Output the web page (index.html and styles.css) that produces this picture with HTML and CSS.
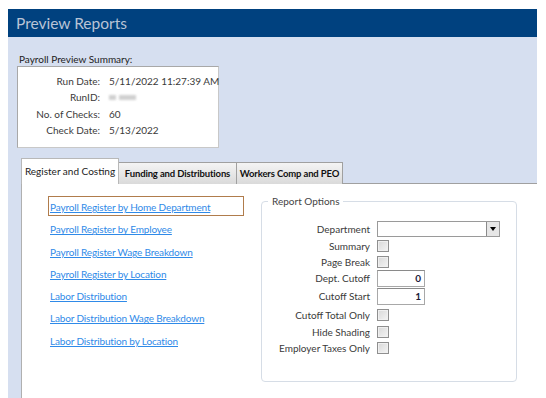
FILE: index.html
```html
<!DOCTYPE html>
<html>
<head>
    <meta name="viewport" content="width=device-width, initial-scale=1.0">
    <title>Preview Reports</title>
    <link rel="stylesheet" href="styles.css">
</head>
<body>
    <div class="window">
        <div class="header">Preview Reports</div>
        <div class="content">
            <div class="summary-caption">Payroll Preview Summary:</div>
            <div class="summary">
                <div class="label">Run Date:</div><div class="value">5/11/2022 11:27:39 AM</div>
                <div class="label">RunID:</div><div class="value"><span class="blur"></span><span class="blur wide"></span></div>
                <div class="label">No. of Checks:</div><div class="value">60</div>
                <div class="label">Check Date:</div><div class="value">5/13/2022</div>
            </div>

            <div class="tabs">
                <div class="tab active">Register and Costing</div>
                <div class="tab funding">Funding and Distributions</div>
                <div class="tab workers">Workers Comp and PEO</div>
                <div class="tab-rest"></div>
            </div>
            <div class="panel">
                <div class="links">
                    <a href="#" class="link focused">Payroll Register by Home Department</a>
                    <a href="#" class="link">Payroll Register by Employee</a>
                    <a href="#" class="link">Payroll Register Wage Breakdown</a>
                    <a href="#" class="link">Payroll Register by Location</a>
                    <a href="#" class="link">Labor Distribution</a>
                    <a href="#" class="link">Labor Distribution Wage Breakdown</a>
                    <a href="#" class="link">Labor Distribution by Location</a>
                </div>
                <fieldset class="options">
                    <legend>Report Options</legend>
                    <div class="form">
                        <label>Department</label>
                        <div class="combo"><span class="combo-btn"></span></div>
                        <label>Summary</label>
                        <div class="check"></div>
                        <label>Page Break</label>
                        <div class="check"></div>
                        <label>Dept. Cutoff</label>
                        <div class="textbox">0</div>
                        <label>Cutoff Start</label>
                        <div class="textbox">1</div>
                        <label>Cutoff Total Only</label>
                        <div class="check"></div>
                        <label>Hide Shading</label>
                        <div class="check"></div>
                        <label>Employer Taxes Only</label>
                        <div class="check"></div>
                    </div>
                </fieldset>
            </div>
        </div>
    </div>
</body>
</html>
```

FILE: styles.css
```css
body {
    margin: 0;
    background: white;
    font-family: Lato, "Open Sans", sans-serif;
    font-size: 10px;
    color: #3a3a3a;
}
.window {
    margin: 9px 9px 0 8px;
    height: 389px;
    background: #d6dff0;
    overflow: hidden;
}
.header {
    height: 28px;
    line-height: 29px;
    background: #00417f;
    color: #b9c4d6;
    font-size: 15.5px;
    padding-left: 8px;
}
.content {
    padding: 15px 0 0 9px;
}
.summary-caption {
    margin-left: 2px;
    line-height: 14px;
    color: #222;
}
.summary {
    width: 200px;
    height: 74px;
    box-sizing: content-box;
    background: white;
    border: 1px solid #a8a8a8;
    border-right-color: #c8c8c8;
    border-bottom-color: #c8c8c8;
    display: grid;
    grid-template-columns: 82px 1fr;
    column-gap: 9px;
    grid-auto-rows: 16.3px;
    align-content: start;
    padding-top: 6px;
}
.summary .label {
    text-align: right;
    line-height: 16px;
}
.summary .value {
    line-height: 16px;
    display: flex;
    align-items: center;
    gap: 3px;
    white-space: nowrap;
}
.blur {
    display: inline-block;
    width: 7px;
    height: 5px;
    background: #d0d0d0;
    filter: blur(1px);
}
.blur.wide {
    width: 17px;
}
.tabs {
    margin: 10px 0 0 4px;
    display: flex;
    align-items: flex-end;
    height: 26px;
}
.tab {
    height: 22px;
    line-height: 22px;
    background: linear-gradient(#f4f4f4, #dadada);
    border: 1px solid #a0a0a0;
    border-left: none;
    border-bottom: none;
    color: #111;
    font-weight: bold;
    font-size: 9.5px;
    letter-spacing: -0.15px;
    text-align: center;
    white-space: nowrap;
    box-sizing: border-box;
}
.tab.funding {
    width: 118px;
}
.tab.workers {
    width: 106px;
}
.tab.active {
    width: 98px;
    height: 26px;
    line-height: 24px;
    background: white;
    border: 1px solid #b8b8b8;
    border-bottom: none;
    font-weight: normal;
    font-size: 10px;
    letter-spacing: 0;
    color: #222;
}
.tab-rest {
    flex: 1;
    border-bottom: 1px solid #a0a0a0;
}
.panel {
    margin-left: 4px;
    background: white;
    border-left: 1px solid #b0b0b0;
    height: 220px;
    display: flex;
    padding-top: 12px;
}
.links {
    width: 213px;
    padding-left: 26px;
    display: flex;
    flex-direction: column;
}
.link {
    display: block;
    width: 196px;
    height: 20px;
    line-height: 20px;
    margin-bottom: 2.3px;
    padding-left: 1px;
    border: 1px solid transparent;
    color: #2f8ae8;
    text-decoration: underline;
    letter-spacing: -0.15px;
    white-space: nowrap;
    box-sizing: border-box;
}
.link.focused {
    border-color: #b07c4c;
}
.options {
    margin: -1px 0 0 0;
    width: 256px;
    height: 187px;
    box-sizing: border-box;
    border: 1px solid #d6dde6;
    border-radius: 4px;
    padding: 0;
}
.options legend {
    margin-left: 6px;
    padding: 0 4px;
    color: #444;
    line-height: 12px;
}
.form {
    display: grid;
    grid-template-columns: 108px 1fr;
    grid-template-rows: 17px 16px 16px 17px 19px 18px 16px 16px;
    column-gap: 7px;
    margin-top: 13.5px;
    align-items: center;
}
.form label {
    text-align: right;
    white-space: nowrap;
}
.combo {
    width: 123px;
    height: 16px;
    border: 1px solid #9a9a9a;
    box-sizing: border-box;
    position: relative;
}
.combo-btn {
    position: absolute;
    right: 0;
    top: 0;
    width: 13px;
    height: 14px;
    background: #e6e6e6;
    border-left: 1px solid #8a8a8a;
    box-sizing: border-box;
}
.combo-btn::after {
    content: "";
    position: absolute;
    left: 3px;
    top: 5px;
    border-left: 3px solid transparent;
    border-right: 3px solid transparent;
    border-top: 4px solid #000;
}
.check {
    width: 12px;
    height: 12px;
    box-sizing: border-box;
    border: 1px solid #8f8f8f;
    background: linear-gradient(135deg, #d8d8d8, #f4f4f4);
    box-shadow: inset 0 0 0 1px #f0f0f0;
}
.textbox {
    width: 48px;
    height: 17px;
    box-sizing: border-box;
    border: 1px solid #a8a8a8;
    border-top-color: #8a8a8a;
    text-align: right;
    padding-right: 3px;
    line-height: 15px;
    font-weight: bold;
    color: #1a1a3a;
}
```
